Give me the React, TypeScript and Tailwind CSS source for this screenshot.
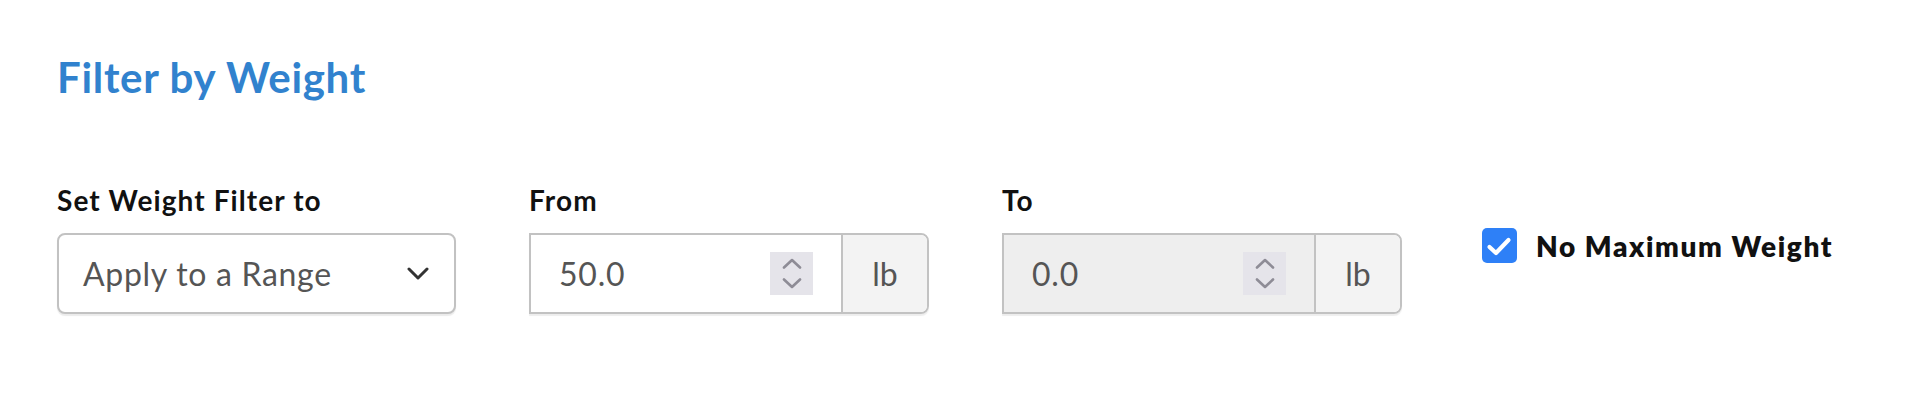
function Spinner() {
  return (
    <div className="flex h-[43px] w-[43px] flex-col items-center justify-center gap-[9px] bg-[#e5e4ea]">
      <svg width="20" height="11" viewBox="0 0 20 11" fill="none" stroke="#8e8c96" strokeWidth="2.6" strokeLinecap="round" strokeLinejoin="round">
        <path d="M2 9.5 10 2l8 7.5" />
      </svg>
      <svg width="20" height="11" viewBox="0 0 20 11" fill="none" stroke="#8e8c96" strokeWidth="2.6" strokeLinecap="round" strokeLinejoin="round">
        <path d="M2 1.5 10 9l8-7.5" />
      </svg>
    </div>
  );
}

function WeightInput({ value, disabled }: { value: string; disabled?: boolean }) {
  return (
    <div className="flex h-[81px] overflow-hidden rounded-r-[8px] border-2 border-[#c2c2c2] shadow-[0_2px_1px_rgba(0,0,0,0.07)]">
      <div className={`flex flex-1 items-center justify-between pl-[28px] pr-[28px] ${disabled ? 'bg-[#eeeeee]' : 'bg-white'}`}>
        <span className="text-[32px] leading-none tracking-[0.8px] text-[#555555]">{value}</span>
        <Spinner />
      </div>
      <div className="flex w-[86px] items-center justify-center border-l-2 border-[#c2c2c2] bg-[#f3f3f3]">
        <span className="text-[32px] leading-none text-[#555555]">lb</span>
      </div>
    </div>
  );
}

export default function App() {
  return (
    <div className="h-[406px] w-[1924px] bg-white pl-[57px] pt-[56px] font-['Lato',sans-serif]">
      <h2 className="text-[42px] font-bold leading-none tracking-[0.7px] text-[#3182ce]">Filter by Weight</h2>

      <div className="mt-[88px] flex items-start gap-[73px]">
        <div className="w-[399px]">
          <label className="block text-[28px] font-bold leading-none tracking-[1.1px] text-[#111111]">Set Weight Filter to</label>
          <div className="mt-[19px] flex h-[81px] items-center justify-between rounded-[8px] border-2 border-[#c2c2c2] bg-white pl-[24px] pr-[25px] shadow-[0_2px_1px_rgba(0,0,0,0.08)]">
            <span className="text-[32px] leading-none tracking-[0.7px] text-[#555555]">Apply to a Range</span>
            <svg width="22" height="13" viewBox="0 0 22 13" fill="none" stroke="#333333" strokeWidth="3" strokeLinecap="round" strokeLinejoin="round">
              <path d="M2 2l9 9 9-9" />
            </svg>
          </div>
        </div>

        <div className="w-[400px]">
          <label className="block text-[28px] font-bold leading-none tracking-[1.1px] text-[#111111]">From</label>
          <div className="mt-[19px]">
            <WeightInput value="50.0" />
          </div>
        </div>

        <div className="w-[400px]">
          <label className="block text-[28px] font-bold leading-none tracking-[1.1px] text-[#111111]">To</label>
          <div className="mt-[19px]">
            <WeightInput value="0.0" disabled />
          </div>
        </div>

        <label className="ml-[7px] mt-[42px] flex items-center gap-[19px]">
          <span className="flex h-[35px] w-[35px] items-center justify-center rounded-[5px] bg-[#2e80f7]">
            <svg width="35" height="35" viewBox="0 0 35 35" fill="none" stroke="white" strokeWidth="4.2" strokeLinecap="round" strokeLinejoin="round">
              <path d="M7.5 19 14 25 26.5 12" />
            </svg>
          </span>
          <span className="text-[28px] font-extrabold leading-none tracking-[1.6px] text-[#111111]">No Maximum Weight</span>
        </label>
      </div>
    </div>
  );
}
